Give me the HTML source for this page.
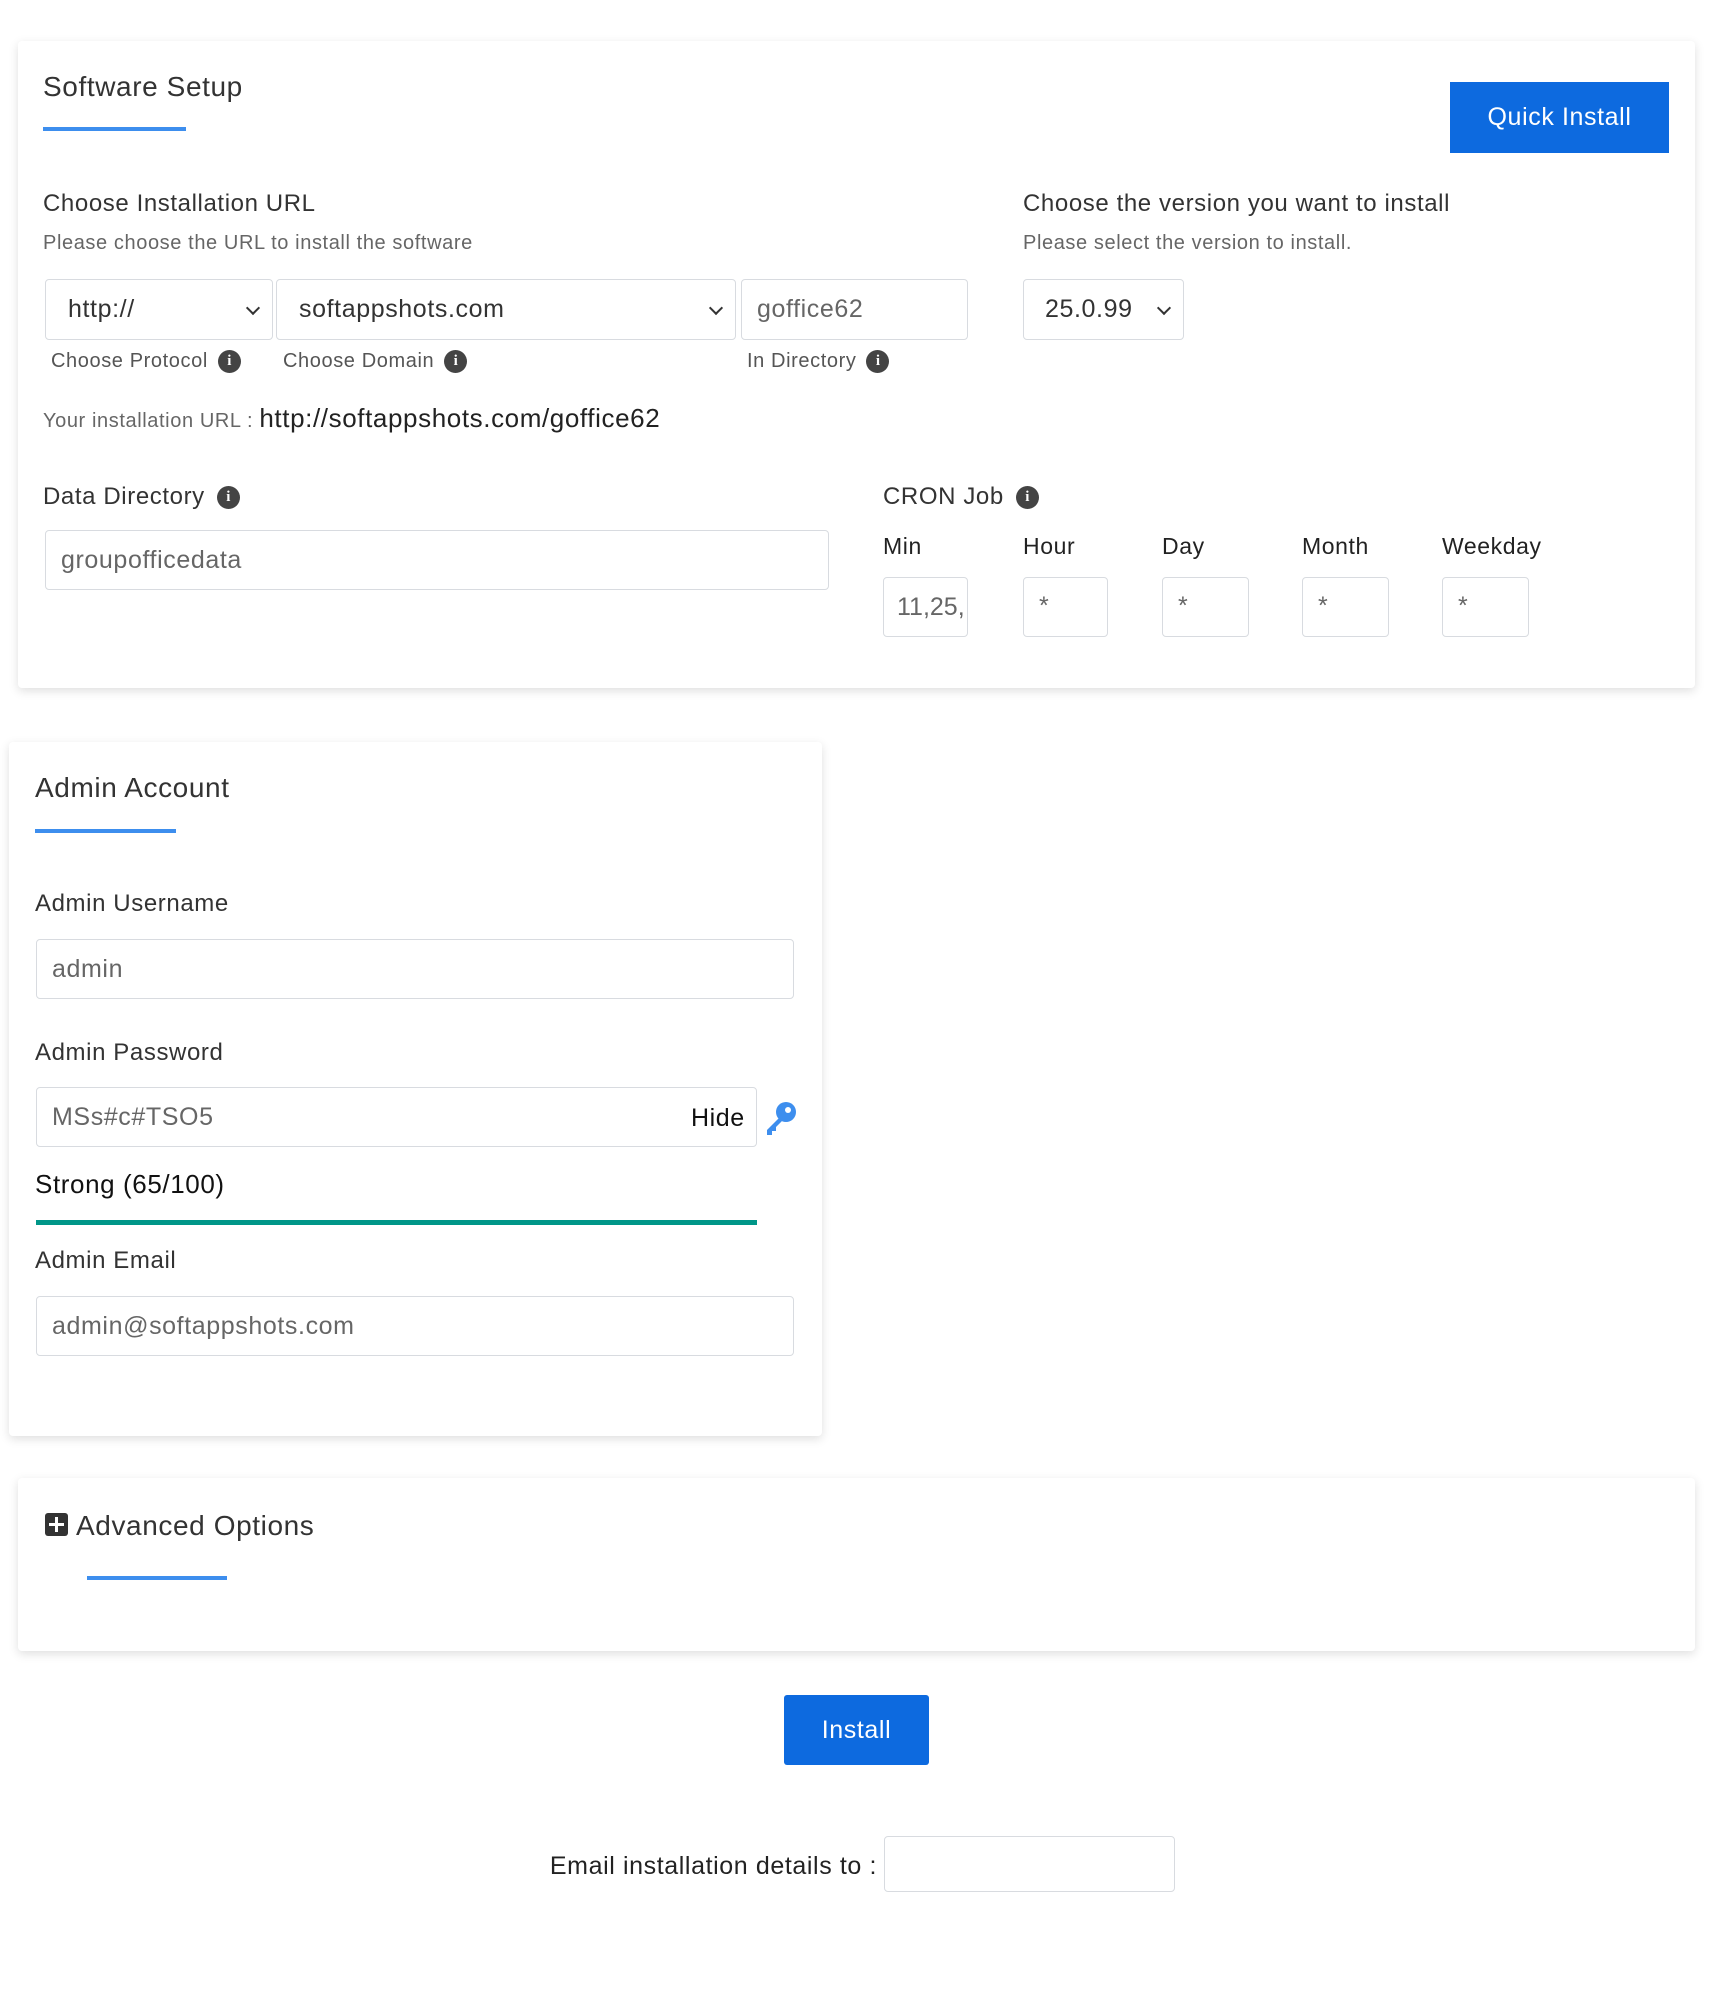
<!DOCTYPE html>
<html><head><meta charset="utf-8"><style>
*{box-sizing:border-box;margin:0;padding:0}
body{width:1715px;height:2000px;background:#fff;font-family:"Liberation Sans",Arial,sans-serif;color:#333;position:relative;overflow:hidden;letter-spacing:0.6px}
.a{position:absolute;white-space:nowrap}
.card{position:absolute;background:#fff;box-shadow:0 3px 10px rgba(0,0,0,.13);border-radius:4px}
.ul{position:absolute;height:4px;background:#3d8eee}
.inp{position:absolute;border:1.5px solid #d8dbe0;border-radius:4px;background:#fff;color:#666;font-size:25px;padding-left:15px;display:flex;align-items:center}
.sel{color:#333}
.sel:after{content:"";position:absolute;right:14px;top:50%;width:8px;height:8px;border-right:2.5px solid #333;border-bottom:2.5px solid #333;transform:translateY(-70%) rotate(45deg)}
.info{display:inline-block;width:23px;height:23px;border-radius:50%;background:#444;color:#fff;font-size:15px;font-weight:bold;text-align:center;line-height:23px;font-family:"Liberation Serif",serif;vertical-align:middle;margin-left:10px;letter-spacing:0}
.lbl{font-size:20px;color:#555}
.h{font-size:24px;color:#333}
.btn{position:absolute;background:#0d6adf;color:#fff;font-size:25px;display:flex;align-items:center;justify-content:center;border-radius:3px}
</style></head><body>

<div class="card" style="left:18px;top:41px;width:1677px;height:647px"></div>
<div class="a" style="left:43px;top:71px;font-size:28px">Software Setup</div>
<div class="ul" style="left:43px;top:127px;width:143px"></div>
<div class="btn" style="left:1450px;top:82px;width:219px;height:71px;border-radius:0">Quick Install</div>

<div class="a h" style="left:43px;top:190px">Choose Installation URL</div>
<div class="a lbl" style="left:43px;top:232px;color:#666">Please choose the URL to install the software</div>
<div class="a h" style="left:1023px;top:190px">Choose the version you want to install</div>
<div class="a lbl" style="left:1023px;top:232px;color:#666">Please select the version to install.</div>

<div class="inp sel" style="left:45px;top:279px;width:228px;height:61px;padding-left:22px">http://</div>
<div class="inp sel" style="left:276px;top:279px;width:460px;height:61px;padding-left:22px">softappshots.com</div>
<div class="inp" style="left:741px;top:279px;width:227px;height:61px">goffice62</div>
<div class="inp sel" style="left:1023px;top:279px;width:161px;height:61px;padding-left:21px">25.0.99</div>

<div class="a lbl" style="left:51px;top:350px">Choose Protocol<span class="info">i</span></div>
<div class="a lbl" style="left:283px;top:350px">Choose Domain<span class="info">i</span></div>
<div class="a lbl" style="left:747px;top:350px">In Directory<span class="info">i</span></div>

<div class="a" style="left:43px;top:403px;font-size:20px;color:#666">Your installation URL : <span style="font-size:26px;color:#222">http://softappshots.com/goffice62</span></div>

<div class="a h" style="left:43px;top:483px">Data Directory<span class="info" style="margin-left:12px">i</span></div>
<div class="inp" style="left:45px;top:530px;width:784px;height:60px">groupofficedata</div>

<div class="a h" style="left:883px;top:483px">CRON Job<span class="info" style="margin-left:12px">i</span></div>
<div class="a" style="left:883px;top:533px;font-size:23px;color:#222">Min</div>
<div class="a" style="left:1023px;top:533px;font-size:23px;color:#222">Hour</div>
<div class="a" style="left:1162px;top:533px;font-size:23px;color:#222">Day</div>
<div class="a" style="left:1302px;top:533px;font-size:23px;color:#222">Month</div>
<div class="a" style="left:1442px;top:533px;font-size:23px;color:#222">Weekday</div>
<div class="inp" style="left:883px;top:577px;width:85px;height:60px;padding-left:13px;letter-spacing:0">11,25,</div>
<div class="inp" style="left:1023px;top:577px;width:85px;height:60px;align-items:flex-start;padding-top:14px">*</div>
<div class="inp" style="left:1162px;top:577px;width:87px;height:60px;align-items:flex-start;padding-top:14px">*</div>
<div class="inp" style="left:1302px;top:577px;width:87px;height:60px;align-items:flex-start;padding-top:14px">*</div>
<div class="inp" style="left:1442px;top:577px;width:87px;height:60px;align-items:flex-start;padding-top:14px">*</div>

<div class="card" style="left:9px;top:742px;width:813px;height:694px"></div>
<div class="a" style="left:35px;top:772px;font-size:28px">Admin Account</div>
<div class="ul" style="left:35px;top:829px;width:141px"></div>
<div class="a h" style="left:35px;top:890px">Admin Username</div>
<div class="inp" style="left:36px;top:939px;width:758px;height:60px">admin</div>
<div class="a h" style="left:35px;top:1039px">Admin Password</div>
<div class="inp" style="left:36px;top:1087px;width:721px;height:60px">MSs#c#TSO5</div>
<div class="a" style="left:691px;top:1104px;font-size:25px;color:#111">Hide</div>
<svg class="a" style="left:762px;top:1101px" width="36" height="36" viewBox="0 0 36 36"><circle cx="24" cy="11" r="10" fill="#3d8eee"/><circle cx="26" cy="9" r="3" fill="#fff"/><path d="M17 17 L5 29 L5 34 L10 34 L10 30 L14 30 L14 26 L20 20 Z" fill="#3d8eee"/></svg>
<div class="a" style="left:35px;top:1169px;font-size:26px;color:#111">Strong (65/100)</div>
<div class="a" style="left:36px;top:1220px;width:721px;height:5px;background:#009688"></div>
<div class="a h" style="left:35px;top:1247px">Admin Email</div>
<div class="inp" style="left:36px;top:1296px;width:758px;height:60px">admin@softappshots.com</div>

<div class="card" style="left:18px;top:1478px;width:1677px;height:173px"></div>
<div class="a" style="left:45px;top:1513px;width:23px;height:23px;background:#333;border-radius:3px"></div>
<div class="a" style="left:49px;top:1523px;width:15px;height:3px;background:#fff"></div>
<div class="a" style="left:55px;top:1517px;width:3px;height:15px;background:#fff"></div>
<div class="a" style="left:76px;top:1510px;font-size:28px">Advanced Options</div>
<div class="ul" style="left:87px;top:1576px;width:140px"></div>

<div class="btn" style="left:784px;top:1695px;width:145px;height:70px">Install</div>

<div class="a" style="right:838px;top:1852px;font-size:25px;color:#222">Email installation details to :</div>
<div class="inp" style="left:884px;top:1836px;width:291px;height:56px"></div>
</body></html>
